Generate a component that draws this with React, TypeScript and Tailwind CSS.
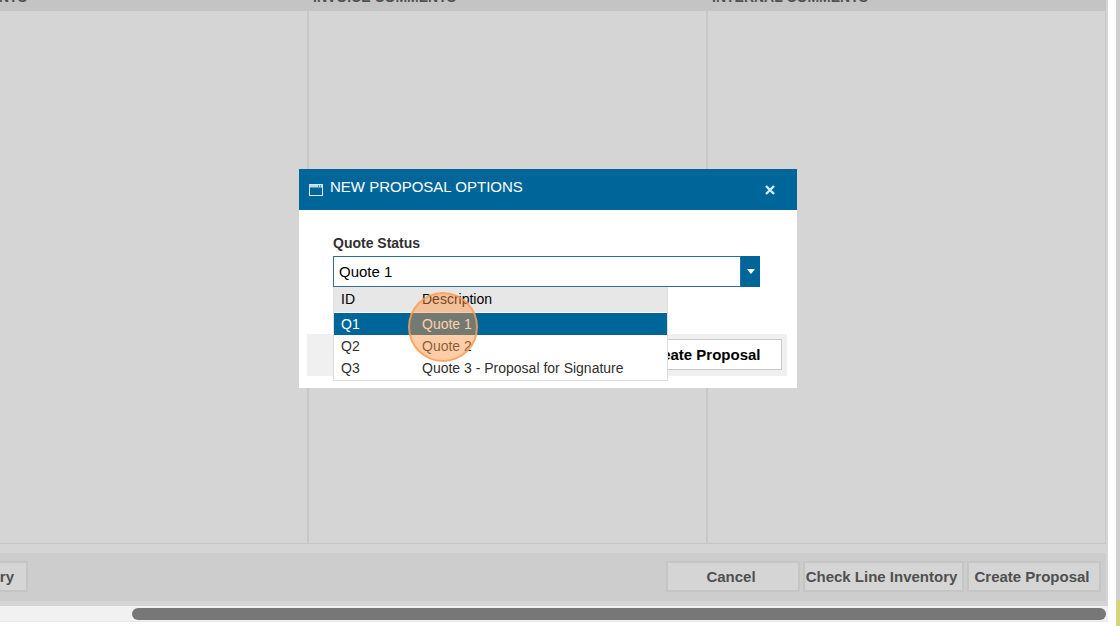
import { useState } from 'react';
import clsx from 'clsx';

const quoteStatuses = [
  { id: 'Q1', description: 'Quote 1' },
  { id: 'Q2', description: 'Quote 2' },
  { id: 'Q3', description: 'Quote 3 - Proposal for Signature' },
];

const footerButton =
  'h-[31px] border-2 border-[#c5c5c5] bg-[#d5d5d5] pt-0.5 text-[15px] font-bold whitespace-nowrap text-[#505050]';

function CommentColumns() {
  return (
    <div className="mr-0.5 flex flex-1 flex-col">
      <div className="grid h-[11px] grid-cols-[309fr_399fr_398fr] content-end overflow-hidden bg-[#c4c4c4] pb-1.5 text-sm leading-4 font-bold whitespace-nowrap text-[#505050]">
        <h2 className="flex w-[27px] justify-end">ORDER COMMENTS</h2>
        <h2 className="pl-1">INVOICE COMMENTS</h2>
        <h2 className="pl-1">INTERNAL COMMENTS</h2>
      </div>
      <div className="grid flex-1 grid-cols-[309fr_399fr_398fr] border-b border-[#c6c6c6]">
        <div className="border-r-2 border-[#c8c8c8]" />
        <div className="border-r-2 border-[#c8c8c8]" />
        <div className="border-r border-[#c8c8c8]" />
      </div>
    </div>
  );
}

function PageFooter() {
  return (
    <div className="mt-[9px] mr-0.5 mb-[5px] flex h-12 items-start justify-between bg-[#cdcdcd] pt-2 pr-[5px]">
      <button className={clsx(footerButton, 'flex w-7 items-center justify-end overflow-hidden border-l-0 pr-3')}>
        Inventory
      </button>
      <div className="flex gap-[3px]">
        <button className={clsx(footerButton, 'w-[134px] pr-1')}>Cancel</button>
        <button className={clsx(footerButton, 'w-[161px] pr-1')}>Check Line Inventory</button>
        <button className={clsx(footerButton, 'w-[134px] pr-1')}>Create Proposal</button>
      </div>
    </div>
  );
}

function StatusDropdown({ selected, onSelect }: { selected: string; onSelect: (id: string) => void }) {
  return (
    <div className="absolute top-full left-0 w-[335px] border border-t-0 border-[#dedede] bg-white pb-px">
      <table className="w-full table-fixed border-collapse text-left text-sm text-[#303030]">
        <thead>
          <tr className="h-[25px] border-b border-white bg-[#e7e7e7] text-black">
            <th className="w-20 pl-[7px] font-normal">ID</th>
            <th className="pl-2 font-normal">Description</th>
          </tr>
        </thead>
        <tbody>
          {quoteStatuses.map((status) => (
            <tr
              key={status.id}
              onClick={() => onSelect(status.id)}
              className={clsx('h-[22px] leading-[22px]', status.id === selected && 'bg-[#006699] text-white')}
            >
              <td className="pl-[7px]">{status.id}</td>
              <td className="pl-2">{status.description}</td>
            </tr>
          ))}
        </tbody>
      </table>

      {/* Click highlight */}
      <div className="pointer-events-none absolute top-[5px] left-[74px] size-[70px] rounded-full border-2 border-[#fb9d55]/80 bg-[#ff9240]/45" />
    </div>
  );
}

function ProposalDialog() {
  const [selected, setSelected] = useState('Q1');
  const current = quoteStatuses.find((status) => status.id === selected);

  return (
    <div role="dialog" aria-labelledby="dialog-title" className="w-[498px] bg-white pb-3">
      <div className="flex h-[41px] items-center justify-between bg-[#006699] pr-[21px] pl-2.5 text-white">
        <div className="flex items-center gap-[7px]">
          <svg viewBox="0 0 14 12" className="h-3 w-3.5" fill="none">
            <rect x="0.5" y="0.5" width="13" height="11" stroke="#d9e9f2" />
            <path d="M1 1h12v2.5H1z" fill="#b9d8e8" />
            <path d="M9 2h1M11 2h1" stroke="#006699" />
          </svg>
          <h1 id="dialog-title" className="pb-1.5 text-[15px] leading-5">
            NEW PROPOSAL OPTIONS
          </h1>
        </div>
        <button aria-label="Close" className="flex size-3 items-center justify-center">
          <svg viewBox="0 0 10 10" className="size-2.5" stroke="#d3ecfa" strokeWidth="2.4">
            <path d="M1 1l8 8M9 1l-8 8" />
          </svg>
        </button>
      </div>

      <div className="px-[34px] pt-[23px]">
        <label htmlFor="quote-status" className="block h-[23px] text-sm leading-5 font-bold text-[#303030]">
          Quote Status
        </label>
        <div className="relative flex h-[31px] w-[427px]">
          <input
            id="quote-status"
            readOnly
            value={current?.description ?? ''}
            className="min-w-0 flex-1 border border-[#2b6f9a] bg-white pt-0.5 pl-[5px] text-[15px] text-black outline-none"
          />
          <button aria-label="Show statuses" className="flex w-[19px] items-center justify-center bg-[#006699]">
            <svg viewBox="0 0 8 5" className="h-[5px] w-2" fill="#fff">
              <path d="M0 0h8L4 5z" />
            </svg>
          </button>
          <StatusDropdown selected={selected} onSelect={setSelected} />
        </div>
      </div>

      <div className="mx-2 mt-[47px] mr-2.5 flex h-[42px] items-start justify-end bg-[#f0f0f0] pt-[5px] pr-[5px]">
        <button className="h-[31px] w-[158px] border border-[#c8c8c8] bg-white pt-0.5 text-[15px] font-bold text-black">
          Create Proposal
        </button>
      </div>
    </div>
  );
}

export default function App() {
  return (
    <div className="relative flex h-screen overflow-hidden bg-white font-['Liberation_Sans',Arial,sans-serif]">
      <div className="flex min-w-0 flex-1 flex-col pb-1">
        <div className="flex flex-1 flex-col bg-[#d5d5d5]">
          <CommentColumns />
          <PageFooter />
        </div>
        {/* Horizontal scrollbar */}
        <div className="flex h-4 items-center border-b border-[#e8e8e8] bg-[#f1f1f1] pr-0.5 pl-[132px]">
          <div className="h-3 flex-1 rounded-full bg-[#777777]" />
        </div>
      </div>

      <div className="ml-2 flex w-1 flex-col">
        <div className="flex-1 bg-[#d0d0d0]" />
        <div className="h-[26px] bg-[#d5d67c]" />
      </div>

      <div className="absolute inset-0 flex items-start justify-center pt-[169px] pr-6">
        <ProposalDialog />
      </div>
    </div>
  );
}
